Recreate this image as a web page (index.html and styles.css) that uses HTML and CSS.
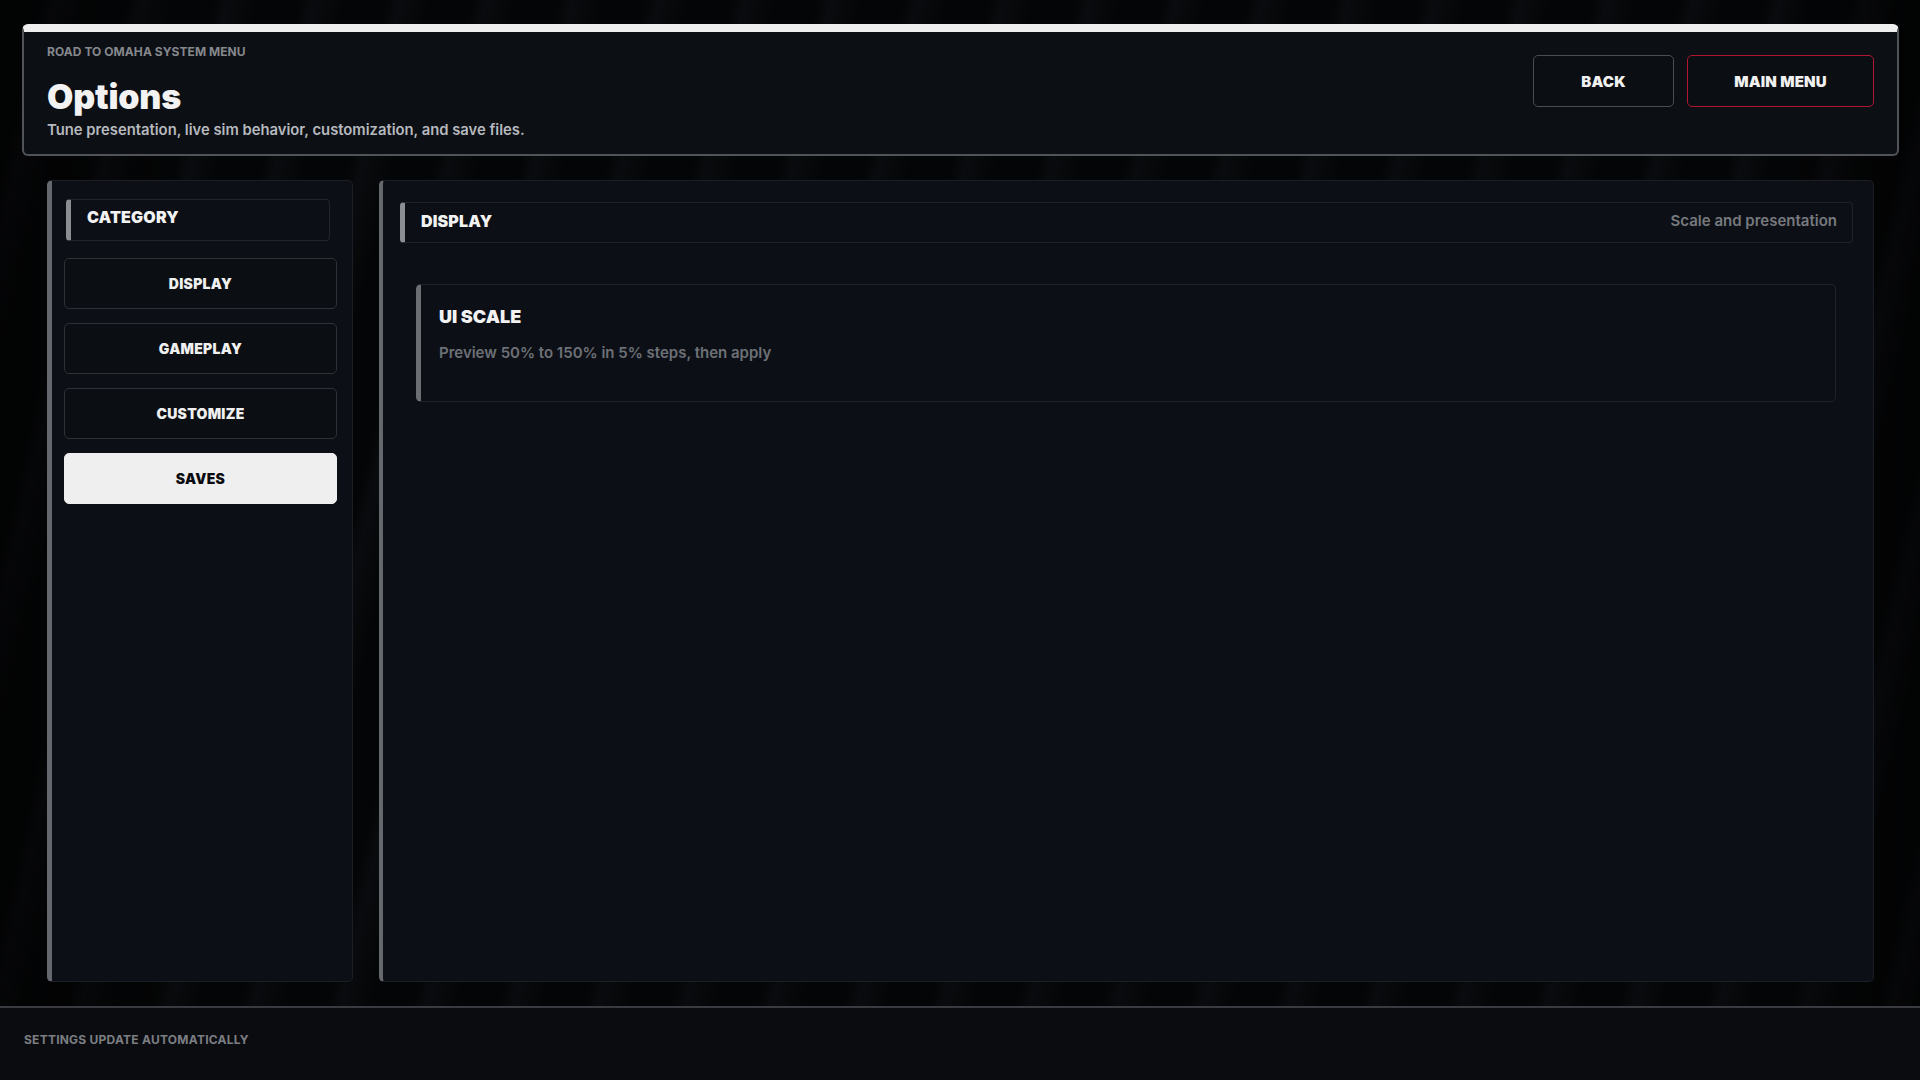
FILE: index.html
```html
<!DOCTYPE html>
<html lang="en">
<head>
<meta charset="utf-8">
<title>Options</title>
<link rel="stylesheet" href="styles.css">
</head>
<body>
<div class="page">
  <header class="topbar">
    <div class="titles">
      <div class="eyebrow">ROAD TO OMAHA SYSTEM MENU</div>
      <h1 class="title">Options</h1>
      <p class="subtitle">Tune presentation, live sim behavior, customization, and save files.</p>
    </div>
    <div class="actions">
      <button class="btn btn-back">BACK</button>
      <button class="btn btn-main">MAIN MENU</button>
    </div>
  </header>

  <main class="content">
    <aside class="sidebar">
      <div class="cat-head">CATEGORY</div>
      <nav class="cat-list">
        <button class="cat-btn">DISPLAY</button>
        <button class="cat-btn">GAMEPLAY</button>
        <button class="cat-btn">CUSTOMIZE</button>
        <button class="cat-btn active">SAVES</button>
      </nav>
    </aside>

    <section class="panel">
      <div class="section-head">
        <span class="section-title">DISPLAY</span>
        <span class="section-sub">Scale and presentation</span>
      </div>
      <div class="setting-card">
        <div class="setting-name">UI SCALE</div>
        <div class="setting-desc">Preview 50% to 150% in 5% steps, then apply</div>
      </div>
    </section>
  </main>

  <footer class="footer">
    <span class="footer-note">SETTINGS UPDATE AUTOMATICALLY</span>
  </footer>
</div>
</body>
</html>
```

FILE: styles.css
```css
* { box-sizing: border-box; }

html, body {
  margin: 0;
  padding: 0;
  height: 100%;
}

body {
  font-family: Inter, "Noto Sans", "Liberation Sans", sans-serif;
  color: #f0f0f0;
  background-color: #050607;
  background-image:
    linear-gradient(90deg, rgba(0,0,0,0.5) 0%, rgba(0,0,0,0) 10%, rgba(0,0,0,0) 92%, rgba(0,0,0,0.45) 100%),
    repeating-linear-gradient(103deg, #040506 0px, #040506 40px, #0a0b0e 54px, #07080a 70px, #040506 84px);
  overflow: hidden;
}

.page {
  width: 1920px;
  height: 1080px;
  display: flex;
  flex-direction: column;
}

/* Header */
.topbar {
  margin: 24px 21px 0 22px;
  height: 132px;
  background: #0c0f14;
  border: 2px solid #505358;
  border-top: 8px solid #efefef;
  border-radius: 6px;
  display: flex;
  justify-content: space-between;
  align-items: flex-start;
  padding: 12px 23px 0 23px;
}

.eyebrow {
  font-size: 12px;
  line-height: 16px;
  font-weight: 700;
  color: #85888d;
  letter-spacing: 0.005em;
}

.title {
  margin: 18px 0 0 0;
  font-size: 34px;
  line-height: 38px;
  font-weight: 900;
  color: #f2f2f2;
  letter-spacing: -0.005em;
}

.subtitle {
  margin: 4px 0 0 0;
  font-size: 14.8px;
  line-height: 20px;
  font-weight: 600;
  color: #b6b9be;
}

.actions {
  display: flex;
  gap: 13px;
  margin-top: 11px;
}

.btn {
  height: 52px;
  background: #0b0e12;
  border-radius: 5px;
  font-family: Inter, "Noto Sans", "Liberation Sans", sans-serif;
  font-size: 15px;
  font-weight: 900;
  color: #f0f0f0;
  letter-spacing: 0.01em;
  cursor: pointer;
}

.btn-back {
  width: 141px;
  border: 1.5px solid #4a4d53;
}

.btn-main {
  width: 187px;
  border: 1.5px solid #b01632;
}

/* Content */
.content {
  height: 802px;
  margin: 24px 46px 0 47px;
  display: grid;
  grid-template-columns: 306px 1fr;
  gap: 26px;
}

.sidebar {
  background: #0c1016;
  border: 1px solid #1b1f25;
  border-left: 5px solid #65686d;
  border-radius: 5px;
  padding: 18px 15px 0 12px;
}

.cat-head {
  width: 264px;
  height: 42px;
  margin-left: 2px;
  border: 1px solid #22262c;
  border-left: 5px solid #8b8e93;
  border-radius: 4px;
  padding: 7px 0 0 16px;
  font-size: 16px;
  line-height: 20px;
  font-weight: 900;
  color: #f2f2f2;
  letter-spacing: 0.01em;
}

.cat-list {
  margin-top: 17px;
  display: flex;
  flex-direction: column;
  gap: 14px;
}

.cat-btn {
  width: 273px;
  height: 51px;
  background: #0b0e12;
  border: 1px solid #2e3238;
  border-radius: 5px;
  font-family: Inter, "Noto Sans", "Liberation Sans", sans-serif;
  font-size: 14px;
  font-weight: 900;
  color: #f0f0f0;
  letter-spacing: 0.02em;
  cursor: pointer;
}

.cat-btn.active {
  background: #efefef;
  border-color: #efefef;
  color: #0b0d10;
}

.panel {
  background: #0c1016;
  border: 1px solid #1b1f25;
  border-left: 4px solid #65686d;
  border-radius: 5px;
  padding: 21px 20px 0 17px;
}

.section-head {
  height: 41px;
  border: 1px solid #1f2329;
  border-left: 5px solid #8b8e93;
  border-radius: 4px;
  display: flex;
  justify-content: space-between;
  align-items: flex-start;
  padding: 8px 15px 0 16px;
}

.section-title {
  font-size: 16px;
  line-height: 20px;
  font-weight: 900;
  color: #f2f2f2;
  letter-spacing: 0.01em;
}

.section-sub {
  font-size: 15px;
  line-height: 20px;
  font-weight: 600;
  color: #77797e;
}

.setting-card {
  margin: 41px 17px 0 16px;
  height: 118px;
  border: 1px solid #1f2329;
  border-left: 5px solid #6b6e73;
  border-radius: 5px;
  padding: 20px 0 0 18px;
}

.setting-name {
  font-size: 18px;
  line-height: 24px;
  font-weight: 900;
  color: #f2f2f2;
}

.setting-desc {
  margin-top: 14px;
  font-size: 15px;
  line-height: 20px;
  font-weight: 600;
  color: #6d7076;
}

/* Footer */
.footer {
  margin-top: 24px;
  flex: 1;
  background: #0b0c10;
  border-top: 2px solid #393b40;
  padding: 20px 0 0 24px;
}

.footer-note {
  font-size: 12px;
  line-height: 16px;
  font-weight: 700;
  color: #7b7e83;
  letter-spacing: 0.02em;
}
```
